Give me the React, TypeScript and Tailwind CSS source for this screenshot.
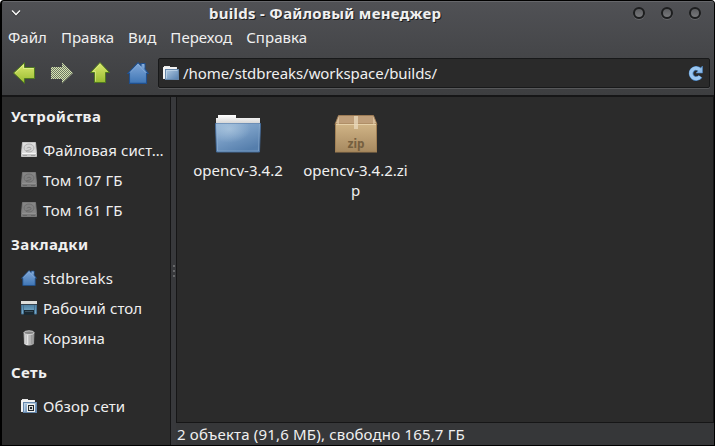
import type { ReactNode } from "react";

function HomeIcon({ size }: { size: number }) {
  return (
    <svg width={size} height={size} viewBox="0 0 22 22" className="block shrink-0">
      <defs>
        <linearGradient id="home" x1="0" y1="0" x2="0" y2="1">
          <stop offset="0" stopColor="#82a9d8" />
          <stop offset="1" stopColor="#3f76b6" />
        </linearGradient>
      </defs>
      <path d="M11 .7 14 3.500V1.500h4v5.500l3.300 4.500H19.500V21.400H2.500V11.500H.7Z" fill="url(#home)" stroke="#20508e" strokeWidth="1.100" />
      <path d="M11 2.200 3.500 10M11 2.200l7.500 8.500M15.500 2.700h1.500v3" fill="none" stroke="#a6c6e8" strokeWidth=".8" opacity=".5" />
    </svg>
  );
}

function LeftArrow() {
  return (
    <svg width="24" height="24" viewBox="0 0 24 24" className="block">
      <defs>
        <linearGradient id="green" x1="0" y1="0" x2="0" y2="1">
          <stop offset="0" stopColor="#dcea70" />
          <stop offset="1" stopColor="#98bb30" />
        </linearGradient>
      </defs>
      <path d="M1.500 12 12.500 1.700V6.500H22.500V17.500H12.500V22.300Z" fill="url(#green)" stroke="#4f7a20" />
      <path d="M3.200 12 11.500 4V7.500H21.500" fill="none" stroke="#edf6a0" opacity=".6" />
    </svg>
  );
}

function RightArrow() {
  return (
    <svg width="24" height="24" viewBox="0 0 24 24" className="block">
      <defs>
        <pattern id="check" width="2" height="2" patternUnits="userSpaceOnUse">
          <rect width="1" height="1" fill="#d8e3b4" />
          <rect x="1" y="1" width="1" height="1" fill="#d8e3b4" />
          <rect x="1" width="1" height="1" fill="#6d7862" />
          <rect y="1" width="1" height="1" fill="#6d7862" />
        </pattern>
      </defs>
      <path d="M23 12 12 1.500V6H1V18H12V22.500Z" fill="url(#check)" />
    </svg>
  );
}

function UpArrow() {
  return (
    <svg width="22" height="24" viewBox="0 0 22 24" className="block">
      <path d="M11 1.500 20.500 11.500H16.500V21.500H5.500V11.500H1.500Z" fill="url(#green)" stroke="#4f7a20" />
      <path d="M11 3.200 4 10.500H6.500V20.500" fill="none" stroke="#edf6a0" opacity=".5" />
    </svg>
  );
}

function SmallFolder({ network = false }: { network?: boolean }) {
  return (
    <svg width="16" height="16" viewBox="0 0 16 16" className="block shrink-0">
      <defs>
        <linearGradient id="smallFolder" x1="0" y1="0" x2="1" y2="1">
          <stop offset="0" stopColor="#b3cbe2" />
          <stop offset="1" stopColor="#557fae" />
        </linearGradient>
      </defs>
      <path d="M0 14V2H1V1H7V2H14V5H3V14Z" fill="#e8e8e8" />
      <path d="M1 13V3h12" fill="none" stroke="#fff" />
      <rect x="2.500" y="4.500" width="13" height="10" fill="url(#smallFolder)" stroke="#6586aa" />
      <path d="M3.500 13.500V5.500h11" fill="none" stroke="#c5d8e9" opacity=".7" />
      {network && (
        <>
          <rect x="6.500" y="6.500" width="7" height="7" fill="#24292f" stroke="#f2f2ee" />
          <rect x="8" y="8" width="4" height="4" fill="#d9dcda" />
          <rect x="9" y="9" width="2" height="2" fill="#24292f" />
        </>
      )}
    </svg>
  );
}

function DriveIcon({ dim = false }: { dim?: boolean }) {
  return (
    <svg width="16" height="16" viewBox="0 0 16 16" className={dim ? "block shrink-0 opacity-50" : "block shrink-0"}>
      <path d="M1.500.5h13l1 11v3H.5v-3Z" fill="#dedede" stroke="#c4c4c4" />
      <path d="M1 11.500h14v3H1Z" fill="#c6c6c6" />
      <path d="M1 11.500h14" stroke="#f7f7f7" />
      <ellipse cx="8" cy="6" rx="5" ry="4" fill="#d6d6d6" stroke="#a5a5a5" strokeWidth=".8" />
      <path d="M6 6.500c0-1.700 4-1.700 4 0S7.500 8 5 9" fill="none" stroke="#909090" strokeWidth=".7" />
      <path d="M2 13.500h4m4 0h4" stroke="#999" strokeWidth=".8" />
    </svg>
  );
}

function DesktopIcon() {
  return (
    <svg width="16" height="16" viewBox="0 0 16 16" className="block shrink-0">
      <defs>
        <linearGradient id="desk" x1="0" y1="0" x2="0" y2="1">
          <stop offset="0" stopColor="#457798" />
          <stop offset="1" stopColor="#82b5d2" />
        </linearGradient>
      </defs>
      <rect x="1" y="3" width="14" height="11" fill="url(#desk)" />
      <path d="M.5 4v10h2V5M15.500 4v10h-2V5" fill="none" stroke="#477394" />
      <rect y="1" width="16" height="3" fill="#dededa" />
      <path d="M0 4.500h16" stroke="#34434f" />
      <rect x="3" y="10" width="10" height="5" fill="#1b2931" />
      <path d="M4 11.500h8" stroke="#3c5261" />
    </svg>
  );
}

function TrashIcon() {
  return (
    <svg width="16" height="16" viewBox="0 0 16 16" className="block shrink-0">
      <defs>
        <linearGradient id="can">
          <stop offset="0" stopColor="#a0a0a0" />
          <stop offset=".3" stopColor="#efefef" />
          <stop offset=".6" stopColor="#b6b6b6" />
          <stop offset="1" stopColor="#8c8c8c" />
        </linearGradient>
      </defs>
      <path d="M2.500 2.500 3 14q5 3 10 0l.5-11.500Z" fill="url(#can)" />
      <path d="M5.500 5v9M8 5v10M10.500 5v9" stroke="#777" strokeWidth=".3" />
      <ellipse cx="8" cy="2.700" rx="5" ry="1.900" fill="#858585" stroke="#d8d8d8" strokeWidth=".9" />
    </svg>
  );
}

function ReloadIcon() {
  return (
    <svg width="16" height="16" viewBox="0 0 16 16" className="block shrink-0">
      <path d="M12.500 11.500A5.200 5.200 0 1 1 11.500 4.300" fill="none" stroke="#4a82bd" strokeWidth="4.600" />
      <path d="M14.500 1v7H8Z" fill="#8bb9e8" stroke="#4a82bd" strokeWidth=".6" />
      <path d="M12.200 11.500A5.200 5.200 0 1 1 12 5" fill="none" stroke="#9bc7f1" strokeWidth="3.400" />
    </svg>
  );
}

function FolderIcon() {
  return (
    <svg width="48" height="40" viewBox="0 0 48 40" className="block">
      <defs>
        <linearGradient id="folder" x1="0" y1="0" x2=".6" y2="1">
          <stop offset="0" stopColor="#94b4d5" />
          <stop offset=".5" stopColor="#779cc4" />
          <stop offset="1" stopColor="#557eac" />
        </linearGradient>
        <linearGradient id="paper" x1="0" y1="0" x2="0" y2="1">
          <stop offset="0" stopColor="#fff" />
          <stop offset="1" stopColor="#d2d2d2" />
        </linearGradient>
        <radialGradient id="shine" cx=".3" cy=".2" r=".5">
          <stop offset="0" stopColor="#c3d9ea" stopOpacity=".5" />
          <stop offset="1" stopColor="#c3d9ea" stopOpacity="0" />
        </radialGradient>
      </defs>
      <path d="M2 9V3H4V0H22V3H46V9Z" fill="url(#paper)" />
      <path d="M1.500 8.500h45l-1 28.500h-43Z" fill="url(#folder)" stroke="#456c9b" />
      <path d="M2.500 8.500h43l-1 27.500h-41Z" fill="url(#shine)" stroke="#a8c4df" strokeOpacity=".4" />
    </svg>
  );
}

function ZipIcon() {
  return (
    <svg width="48" height="40" viewBox="0 0 48 40" className="block">
      <defs>
        <linearGradient id="box" x1="0" y1="0" x2="0" y2="1">
          <stop offset="0" stopColor="#d0b486" />
          <stop offset="1" stopColor="#a68960" />
        </linearGradient>
      </defs>
      <path d="M6.500.5h35l3.500 9H3Z" fill="#bf9f7a" stroke="#9c7b55" />
      <rect x="3.500" y="9" width="41" height="28" fill="url(#box)" stroke="#a18055" />
      <path d="M4 9.500h40" stroke="#e5d0a8" />
      <path d="m4 8 3-7v8Zm40 0-3-7v8Z" fill="#d7bd9a" />
      <rect x="22" y="1" width="4" height="13" fill="#ead9bd" opacity=".75" />
      <text x="24" y="33" textAnchor="middle" className="fill-[#76603f] font-['DejaVu_Sans',sans-serif] text-[11.5px] font-bold" textLength="17" lengthAdjust="spacingAndGlyphs">zip</text>
    </svg>
  );
}

function Place({ icon, children }: { icon: ReactNode; children: ReactNode }) {
  return (
    <div className="flex h-[30px] items-center gap-[6px] pl-[19px] tracking-[0.1px]">
      {icon}
      <span className="pb-px whitespace-nowrap">{children}</span>
    </div>
  );
}

function Section({ children }: { children: ReactNode }) {
  return <h2 className="flex h-[38px] items-center pl-[9px] font-bold tracking-[0.4px]">{children}</h2>;
}

function WindowButton() {
  return <span className="size-3 rounded-full border-2 border-[#1d1e1f] bg-linear-to-b from-[#5b5c5f] to-[#77787b] shadow-[0_1px_0_#66676a]" />;
}

export default function App() {
  return (
    <div className="flex h-[446px] w-[715px] flex-col overflow-hidden rounded-t-[4px] border-t border-r border-b border-l-2 border-black bg-[#363739] font-['Noto_Sans',sans-serif] text-[15px] leading-5 text-[#f0f0f0]">
      <header className="flex h-[96px] shrink-0 flex-col border-t border-b-2 border-t-[#66676b] border-b-[#161617] bg-linear-to-b from-[#505155] to-[#3d3e40]">
        <div className="flex h-[22px] shrink-0 items-center">
          <div className="flex w-[207px] pl-[9px]">
            <svg width="10" height="8" viewBox="0 0 10 8"><path d="m1 2 4 4 4-4" fill="none" stroke="#161617" strokeWidth="2" /><path d="m1 1.500 4 4 4-4" fill="none" stroke="#f3f3f3" strokeWidth="1.600" /></svg>
          </div>
          <h1 className="whitespace-nowrap text-[15px] font-bold tracking-[0.28px] [text-shadow:1px_1px_0_#1b1b1b]">builds - Файловый менеджер</h1>
          <div className="ml-auto flex gap-4 pr-[13px]"><WindowButton /><WindowButton /><WindowButton /></div>
        </div>
        <nav className="flex h-[26px] shrink-0 items-center gap-[14px] pl-[6px] tracking-[0.04px]">
          <span>Файл</span><span>Правка</span><span>Вид</span><span>Переход</span><span>Справка</span>
        </nav>
        <div className="flex h-[45px] items-center pl-[10px]">
          <LeftArrow />
          <div className="ml-[14px]"><RightArrow /></div>
          <div className="ml-[15px]"><UpArrow /></div>
          <div className="ml-[16px]"><HomeIcon size={22} /></div>
          <div className="ml-[9px] flex h-[30px] w-[552px] items-center rounded-[2px] border border-[#18191a] bg-[#2a2a2a] pr-[5px] pl-[4px] shadow-[0_1px_0_#57585a]">
            <SmallFolder />
            <span className="ml-[4px] tracking-[-0.06px]">/home/stdbreaks/workspace/builds/</span>
            <div className="ml-auto"><ReloadIcon /></div>
          </div>
        </div>
      </header>
      <div className="flex min-h-0 flex-1">
        <aside className="w-[169px] shrink-0 border-r border-[#161617] bg-[#2b2b2b]">
          <Section>Устройства</Section>
          <Place icon={<DriveIcon />}>Файловая сист…</Place>
          <Place icon={<DriveIcon dim />}>Том 107 ГБ</Place>
          <Place icon={<DriveIcon dim />}>Том 161 ГБ</Place>
          <Section>Закладки</Section>
          <Place icon={<HomeIcon size={16} />}>stdbreaks</Place>
          <Place icon={<DesktopIcon />}>Рабочий стол</Place>
          <Place icon={<TrashIcon />}>Корзина</Place>
          <Section>Сеть</Section>
          <Place icon={<SmallFolder network />}>Обзор сети</Place>
        </aside>
        <div className="flex w-[5px] shrink-0 flex-col items-center justify-center gap-[3px] bg-[#38393c]">
          <i className="size-[2px] bg-[#666769]" /><i className="size-[2px] bg-[#666769]" /><i className="size-[2px] bg-[#666769]" />
        </div>
        <section className="flex min-w-0 flex-1 flex-col">
          <main className="flex h-[326px] shrink-0 items-start border-x border-b border-[#161617] bg-[#2b2b2b] pt-[18px]">
            <div className="flex w-[122px] flex-col items-center"><FolderIcon /><span className="mt-[5px]">opencv-3.4.2</span></div>
            <div className="flex w-[113px] flex-col items-center"><ZipIcon /><span className="mt-[5px] w-[106px] text-center break-all">opencv-3.4.2.zip</span></div>
          </main>
          <footer className="flex flex-1 items-center pb-px pl-px tracking-[0.18px] whitespace-nowrap">2 объекта (91,6 МБ), свободно 165,7 ГБ</footer>
        </section>
      </div>
    </div>
  );
}
